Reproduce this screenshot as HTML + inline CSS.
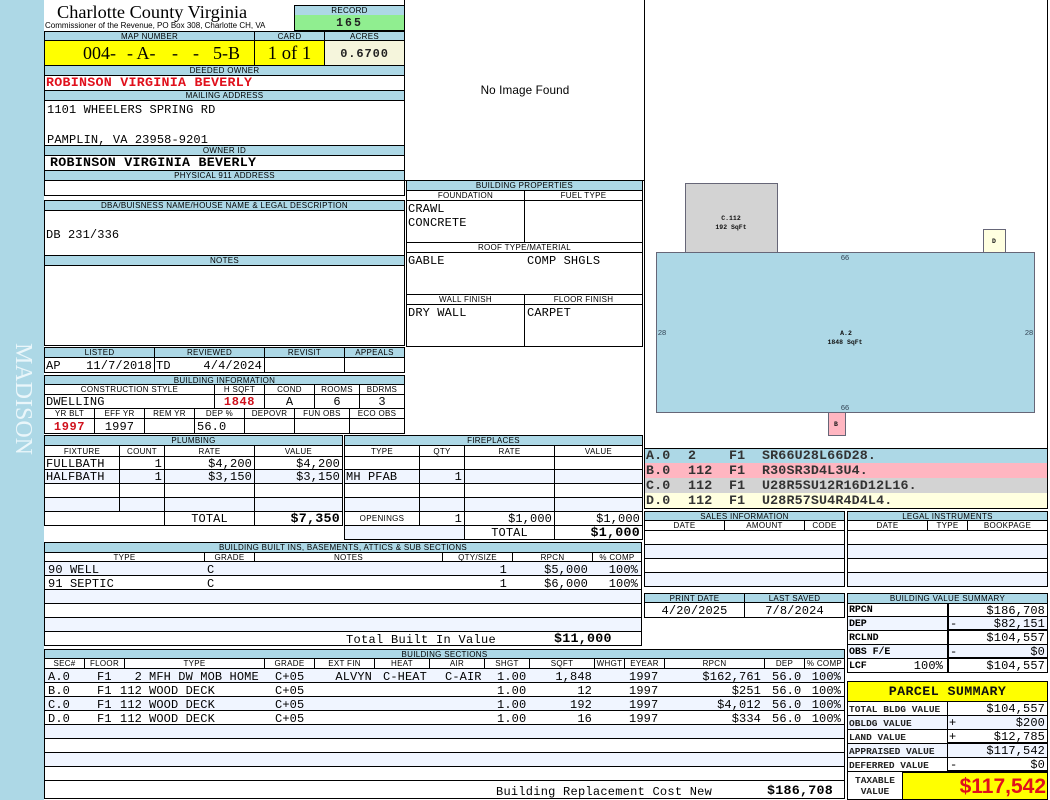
<!DOCTYPE html>
<html><head><meta charset="utf-8"><title>Property Card</title>
<style>
html,body{margin:0;padding:0;background:#fff}
#p{position:relative;width:1050px;height:800px;overflow:hidden;background:#fff;color:#000;font-family:"Liberation Mono",monospace;font-size:12px}
.a{position:absolute;box-sizing:border-box;border:1px solid #000;overflow:hidden;white-space:pre;display:flex;align-items:center;letter-spacing:.12px;padding-top:1px}
.h,.s{justify-content:center;font:8px/1 "Liberation Sans",sans-serif;letter-spacing:.3px}
.h{background:#ADD8E6}
.s{background:#fff}
.c{justify-content:center}
.r{justify-content:flex-end;padding-right:2px}
.l{padding-left:1px}
.sb{justify-content:space-between;padding:1px 2px 0 1px}
.e{background:#F0F5FF}
.t{position:absolute;white-space:pre;line-height:14px;letter-spacing:.12px;transform:translateY(1px)}
.b{font-weight:bold;font-size:13.33px;letter-spacing:.25px}
.red{color:#D0101C}
.ti{font-family:"Liberation Serif",serif;font-size:18.67px;letter-spacing:0}
.m{font-size:10px;font-weight:bold;letter-spacing:-.1px}
.n{font-size:9.5px;letter-spacing:0;font-weight:bold;color:#222}
.lg{position:absolute;left:645px;width:402px;height:15px}
.g{font-weight:bold;font-size:13.33px;color:#333;letter-spacing:.15px;line-height:15px}
</style></head><body><div id="p">
<div style="position:absolute;left:0;top:0;width:44px;height:800px;background:#ADD8E6"></div>
<div style="position:absolute;left:12px;top:343px;width:22px;height:114px;writing-mode:vertical-rl;font:24px/22px 'Liberation Serif',serif;color:#EAF6FA;white-space:nowrap">MADISON</div>

<div class="t ti" style="left:57px;top:2px;line-height:19px;font-size:18.3px">Charlotte County Virginia</div>
<div class="t" style="left:45px;top:20px;font:8px/10px 'Liberation Sans',sans-serif;letter-spacing:0">Commissioner of the Revenue, PO Box 308, Charlotte CH, VA</div>

<div style="position:absolute;left:404px;top:0;width:1px;height:196px;background:#000"></div>
<div class="a h" style="left:294px;top:5px;width:111px;height:11px">RECORD</div>
<div class="a c" style="left:294px;top:15px;width:111px;height:16px;background:#90EE90;border-top:0;font-weight:bold;letter-spacing:2px;font-size:11.5px;color:#222">165</div>

<div class="a h" style="left:44px;top:31px;width:211px;height:10px">MAP NUMBER</div>
<div class="a h" style="left:254px;top:31px;width:71px;height:10px">CARD</div>
<div class="a h" style="left:324px;top:31px;width:81px;height:10px">ACRES</div>
<div class="a" style="left:44px;top:40px;width:211px;height:26px;background:#FFFF00"></div>
<div class="t ti" style="left:83px;top:42px;line-height:21px;font-size:18px">004-</div>
<div class="t ti" style="left:127px;top:42px;line-height:21px;font-size:18px">- A-</div>
<div class="t ti" style="left:172px;top:42px;line-height:21px;font-size:18px">-</div>
<div class="t ti" style="left:193px;top:42px;line-height:21px;font-size:18px">-</div>
<div class="t ti" style="left:213px;top:42px;line-height:21px;font-size:18px">5-B</div>
<div class="a c ti" style="left:254px;top:40px;width:71px;height:26px;background:#FFFF00">1 of 1</div>
<div class="a c" style="left:324px;top:40px;width:81px;height:26px;background:#F5F5DC;font-weight:bold;letter-spacing:.9px;color:#222">0.6700</div>

<div class="a h" style="left:44px;top:65px;width:361px;height:11px">DEEDED OWNER</div>
<div class="a l b" style="left:44px;top:75px;width:361px;height:16px;color:#E0101C;padding-left:1px">ROBINSON VIRGINIA BEVERLY</div>
<div class="a h" style="left:44px;top:90px;width:361px;height:11px">MAILING ADDRESS</div>
<div class="a" style="left:44px;top:100px;width:361px;height:46px"></div>
<div class="t" style="left:47px;top:102px">1101 WHEELERS SPRING RD</div>
<div class="t" style="left:47px;top:132px">PAMPLIN, VA 23958-9201</div>
<div class="a h" style="left:44px;top:145px;width:361px;height:11px">OWNER ID</div>
<div class="a b" style="left:44px;top:155px;width:361px;height:16px;padding-left:5px">ROBINSON VIRGINIA BEVERLY</div>
<div class="a h" style="left:44px;top:170px;width:361px;height:11px">PHYSICAL 911 ADDRESS</div>
<div class="a" style="left:44px;top:180px;width:361px;height:16px"></div>

<div class="a h" style="left:44px;top:200px;width:361px;height:11px">DBA/BUISNESS NAME/HOUSE NAME &amp; LEGAL DESCRIPTION</div>
<div class="a" style="left:44px;top:210px;width:361px;height:46px"></div>
<div class="t" style="left:46px;top:227px">DB 231/336</div>
<div class="a h" style="left:44px;top:255px;width:361px;height:11px">NOTES</div>
<div class="a" style="left:44px;top:265px;width:361px;height:81px"></div>

<div class="a h" style="left:44px;top:347px;width:111px;height:11px">LISTED</div>
<div class="a h" style="left:154px;top:347px;width:111px;height:11px">REVIEWED</div>
<div class="a h" style="left:264px;top:347px;width:81px;height:11px">REVISIT</div>
<div class="a h" style="left:344px;top:347px;width:61px;height:11px">APPEALS</div>
<div class="a sb" style="left:44px;top:357px;width:111px;height:16px"><span>AP</span><span>11/7/2018</span></div>
<div class="a sb" style="left:154px;top:357px;width:111px;height:16px"><span>TD</span><span>4/4/2024</span></div>
<div class="a" style="left:264px;top:357px;width:81px;height:16px"></div>
<div class="a" style="left:344px;top:357px;width:61px;height:16px"></div>

<div class="a h" style="left:44px;top:375px;width:361px;height:10px">BUILDING INFORMATION</div>
<div class="a s" style="left:44px;top:384px;width:171px;height:11px">CONSTRUCTION STYLE</div>
<div class="a s" style="left:214px;top:384px;width:51px;height:11px">H SQFT</div>
<div class="a s" style="left:264px;top:384px;width:51px;height:11px">COND</div>
<div class="a s" style="left:314px;top:384px;width:46px;height:11px">ROOMS</div>
<div class="a s" style="left:359px;top:384px;width:46px;height:11px">BDRMS</div>
<div class="a l" style="left:44px;top:394px;width:171px;height:15px">DWELLING</div>
<div class="a c red" style="left:214px;top:394px;width:51px;height:15px;font-weight:bold;letter-spacing:.6px">1848</div>
<div class="a c" style="left:264px;top:394px;width:51px;height:15px">A</div>
<div class="a c" style="left:314px;top:394px;width:46px;height:15px">6</div>
<div class="a c" style="left:359px;top:394px;width:46px;height:15px">3</div>
<div class="a s" style="left:44px;top:408px;width:51px;height:11px">YR BLT</div>
<div class="a s" style="left:94px;top:408px;width:51px;height:11px">EFF YR</div>
<div class="a s" style="left:144px;top:408px;width:51px;height:11px">REM YR</div>
<div class="a s" style="left:194px;top:408px;width:51px;height:11px">DEP %</div>
<div class="a s" style="left:244px;top:408px;width:51px;height:11px">DEPOVR</div>
<div class="a s" style="left:294px;top:408px;width:56px;height:11px">FUN OBS</div>
<div class="a s" style="left:349px;top:408px;width:56px;height:11px">ECO OBS</div>
<div class="a c red" style="left:44px;top:418px;width:51px;height:16px;font-weight:bold;letter-spacing:.6px">1997</div>
<div class="a c" style="left:94px;top:418px;width:51px;height:16px">1997</div>
<div class="a" style="left:144px;top:418px;width:51px;height:16px"></div>
<div class="a l" style="left:194px;top:418px;width:51px;height:16px;padding-left:2px">56.0</div>
<div class="a" style="left:244px;top:418px;width:51px;height:16px"></div>
<div class="a" style="left:294px;top:418px;width:56px;height:16px"></div>
<div class="a" style="left:349px;top:418px;width:56px;height:16px"></div>

<div class="a h" style="left:44px;top:435px;width:299px;height:11px">PLUMBING</div>
<div class="a s" style="left:44px;top:445px;width:76px;height:12px">FIXTURE</div>
<div class="a s" style="left:119px;top:445px;width:46px;height:12px">COUNT</div>
<div class="a s" style="left:164px;top:445px;width:91px;height:12px">RATE</div>
<div class="a s" style="left:254px;top:445px;width:89px;height:12px">VALUE</div>
<div class="a l" style="left:44px;top:456px;width:76px;height:14px">FULLBATH</div>
<div class="a r" style="left:119px;top:456px;width:46px;height:14px">1</div>
<div class="a r" style="left:164px;top:456px;width:91px;height:14px">$4,200</div>
<div class="a r" style="left:254px;top:456px;width:89px;height:14px">$4,200</div>
<div class="a l e" style="left:44px;top:469px;width:76px;height:15px">HALFBATH</div>
<div class="a r e" style="left:119px;top:469px;width:46px;height:15px">1</div>
<div class="a r e" style="left:164px;top:469px;width:91px;height:15px">$3,150</div>
<div class="a r e" style="left:254px;top:469px;width:89px;height:15px">$3,150</div>
<div class="a" style="left:44px;top:483px;width:76px;height:15px"></div>
<div class="a" style="left:119px;top:483px;width:46px;height:15px"></div>
<div class="a" style="left:164px;top:483px;width:91px;height:15px"></div>
<div class="a" style="left:254px;top:483px;width:89px;height:15px"></div>
<div class="a e" style="left:44px;top:497px;width:76px;height:15px"></div>
<div class="a e" style="left:119px;top:497px;width:46px;height:15px"></div>
<div class="a e" style="left:164px;top:497px;width:91px;height:15px"></div>
<div class="a e" style="left:254px;top:497px;width:89px;height:15px"></div>
<div class="a" style="left:44px;top:511px;width:121px;height:15px"></div>
<div class="a c" style="left:164px;top:511px;width:91px;height:15px">TOTAL</div>
<div class="a r b" style="left:254px;top:511px;width:89px;height:15px">$7,350</div>

<div class="a h" style="left:344px;top:435px;width:299px;height:11px">FIREPLACES</div>
<div class="a s" style="left:344px;top:445px;width:76px;height:12px">TYPE</div>
<div class="a s" style="left:419px;top:445px;width:46px;height:12px">QTY</div>
<div class="a s" style="left:464px;top:445px;width:91px;height:12px">RATE</div>
<div class="a s" style="left:554px;top:445px;width:89px;height:12px">VALUE</div>
<div class="a" style="left:344px;top:456px;width:76px;height:14px"></div>
<div class="a" style="left:419px;top:456px;width:46px;height:14px"></div>
<div class="a" style="left:464px;top:456px;width:91px;height:14px"></div>
<div class="a" style="left:554px;top:456px;width:89px;height:14px"></div>
<div class="a l e" style="left:344px;top:469px;width:76px;height:15px">MH PFAB</div>
<div class="a r e" style="left:419px;top:469px;width:46px;height:15px">1</div>
<div class="a e" style="left:464px;top:469px;width:91px;height:15px"></div>
<div class="a e" style="left:554px;top:469px;width:89px;height:15px"></div>
<div class="a" style="left:344px;top:483px;width:76px;height:15px"></div>
<div class="a" style="left:419px;top:483px;width:46px;height:15px"></div>
<div class="a" style="left:464px;top:483px;width:91px;height:15px"></div>
<div class="a" style="left:554px;top:483px;width:89px;height:15px"></div>
<div class="a e" style="left:344px;top:497px;width:76px;height:15px"></div>
<div class="a e" style="left:419px;top:497px;width:46px;height:15px"></div>
<div class="a e" style="left:464px;top:497px;width:91px;height:15px"></div>
<div class="a e" style="left:554px;top:497px;width:89px;height:15px"></div>
<div class="a s" style="left:344px;top:511px;width:76px;height:15px">OPENINGS</div>
<div class="a r" style="left:419px;top:511px;width:46px;height:15px">1</div>
<div class="a r" style="left:464px;top:511px;width:91px;height:15px">$1,000</div>
<div class="a r" style="left:554px;top:511px;width:89px;height:15px">$1,000</div>
<div class="a e" style="left:344px;top:525px;width:121px;height:15px"></div>
<div class="a c" style="left:464px;top:525px;width:91px;height:15px">TOTAL</div>
<div class="a r b" style="left:554px;top:525px;width:89px;height:15px">$1,000</div>

<div class="a h" style="left:44px;top:542px;width:598px;height:11px">BUILDING BUILT INS, BASEMENTS, ATTICS &amp; SUB SECTIONS</div>
<div class="a s" style="left:44px;top:552px;width:161px;height:10px">TYPE</div>
<div class="a s" style="left:204px;top:552px;width:51px;height:10px">GRADE</div>
<div class="a s" style="left:254px;top:552px;width:189px;height:10px">NOTES</div>
<div class="a s" style="left:442px;top:552px;width:71px;height:10px">QTY/SIZE</div>
<div class="a s" style="left:512px;top:552px;width:81px;height:10px">RPCN</div>
<div class="a s" style="left:592px;top:552px;width:50px;height:10px">% COMP</div>
<div class="a e" style="left:44px;top:561px;width:598px;height:15px"></div>
<div class="a" style="left:44px;top:575px;width:598px;height:15px"></div>
<div class="a e" style="left:44px;top:589px;width:598px;height:15px"></div>
<div class="a" style="left:44px;top:603px;width:598px;height:15px"></div>
<div class="a e" style="left:44px;top:617px;width:598px;height:15px"></div>
<div class="a" style="left:44px;top:631px;width:598px;height:15px"></div>
<div class="t" style="left:48px;top:562px">90 WELL</div><div class="t" style="left:207px;top:562px">C</div>
<div class="t" style="right:543px;top:562px">1</div><div class="t" style="right:462px;top:562px">$5,000</div><div class="t" style="right:412px;top:562px">100%</div>
<div class="t" style="left:48px;top:576px">91 SEPTIC</div><div class="t" style="left:207px;top:576px">C</div>
<div class="t" style="right:543px;top:576px">1</div><div class="t" style="right:462px;top:576px">$6,000</div><div class="t" style="right:412px;top:576px">100%</div>
<div class="t" style="left:346px;top:632px;letter-spacing:.3px">Total Built In Value</div>
<div class="t b" style="left:554px;top:632px">$11,000</div>

<div class="a" style="left:404px;top:-1px;width:241px;height:182px;font:11.7px 'Liberation Sans',sans-serif;justify-content:center;padding-left:1px">No Image Found</div>

<div class="a h" style="left:406px;top:180px;width:237px;height:11px">BUILDING PROPERTIES</div>
<div class="a s" style="left:406px;top:190px;width:119px;height:11px">FOUNDATION</div>
<div class="a s" style="left:524px;top:190px;width:119px;height:11px">FUEL TYPE</div>
<div class="a" style="left:406px;top:200px;width:119px;height:43px"></div>
<div class="a" style="left:524px;top:200px;width:119px;height:43px"></div>
<div class="t" style="left:408px;top:201px">CRAWL</div>
<div class="t" style="left:408px;top:215px">CONCRETE</div>
<div class="a s" style="left:406px;top:242px;width:237px;height:11px">ROOF TYPE/MATERIAL</div>
<div class="a" style="left:406px;top:252px;width:237px;height:43px"></div>
<div class="t" style="left:408px;top:253px">GABLE</div>
<div class="t" style="left:527px;top:253px">COMP SHGLS</div>
<div class="a s" style="left:406px;top:294px;width:119px;height:11px">WALL FINISH</div>
<div class="a s" style="left:524px;top:294px;width:119px;height:11px">FLOOR FINISH</div>
<div class="a" style="left:406px;top:304px;width:119px;height:43px"></div>
<div class="a" style="left:524px;top:304px;width:119px;height:43px"></div>
<div class="t" style="left:408px;top:305px">DRY WALL</div>
<div class="t" style="left:527px;top:305px">CARPET</div>

<div class="a" style="left:644px;top:-1px;width:404px;height:450px;display:block"></div>
<svg style="position:absolute;left:645px;top:170px" width="402" height="275" viewBox="645 170 402 275">
<g stroke="#667" stroke-width="1">
<rect x="685.5" y="183.5" width="92" height="69" fill="#D3D3D3"/>
<rect x="983.5" y="229.5" width="22" height="23" fill="#FFFFE0"/>
<rect x="828.5" y="412.5" width="17" height="23" fill="#FFB6C1"/>
<rect x="656.5" y="252.5" width="378" height="160" fill="#ADD8E6"/>
</g>
<g font-family="Liberation Mono,monospace" font-size="6.5" font-weight="bold" fill="#111" text-anchor="middle">
<text x="731" y="220">C.112</text><text x="731" y="229">192 SqFt</text>
<text x="994" y="243">D</text><text x="836" y="426">B</text>
<text x="846" y="335">A.2</text><text x="845" y="344">1848 SqFt</text>
</g>
<g font-family="Liberation Sans,sans-serif" font-size="7.5" fill="#345" text-anchor="middle">
<text x="845" y="260">66</text><text x="845" y="410">66</text>
<text x="662" y="335">28</text><text x="1029" y="335">28</text>
</g>
</svg>

<div class="a" style="left:644px;top:448px;width:404px;height:61px;border-width:1px"></div>
<div class="lg" style="top:449px;height:14px;background:#ADD8E6"></div>
<div class="lg" style="top:463px;background:#FFB6C1"></div>
<div class="lg" style="top:478px;background:#D3D3D3"></div>
<div class="lg" style="top:493px;background:#FFFFE0"></div>
<div class="t g" style="left:646px;top:448px">A.0</div><div class="t g" style="left:688px;top:448px">2</div><div class="t g" style="left:729px;top:448px">F1</div><div class="t g" style="left:762px;top:448px">SR66U28L66D28.</div>
<div class="t g" style="left:646px;top:463px">B.0</div><div class="t g" style="left:688px;top:463px">112</div><div class="t g" style="left:729px;top:463px">F1</div><div class="t g" style="left:762px;top:463px">R30SR3D4L3U4.</div>
<div class="t g" style="left:646px;top:478px">C.0</div><div class="t g" style="left:688px;top:478px">112</div><div class="t g" style="left:729px;top:478px">F1</div><div class="t g" style="left:762px;top:478px">U28R5SU12R16D12L16.</div>
<div class="t g" style="left:646px;top:493px">D.0</div><div class="t g" style="left:688px;top:493px">112</div><div class="t g" style="left:729px;top:493px">F1</div><div class="t g" style="left:762px;top:493px">U28R57SU4R4D4L4.</div>

<div class="a h" style="left:644px;top:511px;width:201px;height:10px">SALES INFORMATION</div>
<div class="a s" style="left:644px;top:520px;width:81px;height:11px">DATE</div>
<div class="a s" style="left:724px;top:520px;width:81px;height:11px">AMOUNT</div>
<div class="a s" style="left:804px;top:520px;width:41px;height:11px">CODE</div>
<div class="a" style="left:644px;top:530px;width:201px;height:15px"></div>
<div class="a e" style="left:644px;top:544px;width:201px;height:15px"></div>
<div class="a" style="left:644px;top:558px;width:201px;height:15px"></div>
<div class="a e" style="left:644px;top:572px;width:201px;height:15px"></div>

<div class="a h" style="left:847px;top:511px;width:201px;height:10px">LEGAL INSTRUMENTS</div>
<div class="a s" style="left:847px;top:520px;width:81px;height:11px">DATE</div>
<div class="a s" style="left:927px;top:520px;width:41px;height:11px">TYPE</div>
<div class="a s" style="left:967px;top:520px;width:81px;height:11px">BOOKPAGE</div>
<div class="a" style="left:847px;top:530px;width:201px;height:15px"></div>
<div class="a e" style="left:847px;top:544px;width:201px;height:15px"></div>
<div class="a" style="left:847px;top:558px;width:201px;height:15px"></div>
<div class="a e" style="left:847px;top:572px;width:201px;height:15px"></div>

<div class="a h" style="left:644px;top:593px;width:101px;height:10px">PRINT DATE</div>
<div class="a h" style="left:744px;top:593px;width:101px;height:10px">LAST SAVED</div>
<div class="a c" style="left:644px;top:602px;width:101px;height:16px">4/20/2025</div>
<div class="a c" style="left:744px;top:602px;width:101px;height:16px">7/8/2024</div>

<div class="a h" style="left:847px;top:593px;width:201px;height:11px">BUILDING VALUE SUMMARY</div>
<div class="a l m" style="left:847px;top:603px;width:101px;height:14px">RPCN</div>
<div class="a r" style="left:947px;top:603px;width:101px;height:14px;border-left-width:2px">$186,708</div>
<div class="a l m e" style="left:847px;top:616px;width:101px;height:15px">DEP</div>
<div class="a r e" style="left:947px;top:616px;width:101px;height:15px;border-left-width:2px;border-bottom-width:2px">$82,151</div>
<div class="t" style="left:950px;top:616px">-</div>
<div class="a l m" style="left:847px;top:630px;width:101px;height:15px">RCLND</div>
<div class="a r" style="left:947px;top:630px;width:101px;height:15px;border-left-width:2px">$104,557</div>
<div class="a l m e" style="left:847px;top:644px;width:101px;height:15px">OBS F/E</div>
<div class="a r e" style="left:947px;top:644px;width:101px;height:15px;border-left-width:2px;border-bottom-width:2px">$0</div>
<div class="t" style="left:950px;top:644px">-</div>
<div class="a l m" style="left:847px;top:658px;width:101px;height:15px">LCF</div>
<div class="t" style="right:107px;top:658px">100%</div>
<div class="a r" style="left:947px;top:658px;width:101px;height:15px;border-left-width:2px">$104,557</div>

<div class="a c b" style="left:847px;top:681px;width:201px;height:21px;background:#FFFF00;color:#111;letter-spacing:.4px">PARCEL SUMMARY</div>
<div class="a l n" style="left:847px;top:701px;width:101px;height:15px">TOTAL BLDG VALUE</div>
<div class="a r" style="left:947px;top:701px;width:101px;height:15px">$104,557</div>
<div class="a l n e" style="left:847px;top:715px;width:101px;height:15px">OBLDG VALUE</div>
<div class="a r e" style="left:947px;top:715px;width:101px;height:15px">$200</div>
<div class="t" style="left:949px;top:715px">+</div>
<div class="a l n" style="left:847px;top:729px;width:101px;height:15px">LAND VALUE</div>
<div class="a r" style="left:947px;top:729px;width:101px;height:15px;border-bottom-width:2px">$12,785</div>
<div class="t" style="left:949px;top:729px">+</div>
<div class="a l n e" style="left:847px;top:743px;width:101px;height:15px">APPRAISED VALUE</div>
<div class="a r e" style="left:947px;top:743px;width:101px;height:15px">$117,542</div>
<div class="a l n" style="left:847px;top:757px;width:101px;height:15px">DEFERRED VALUE</div>
<div class="a r" style="left:947px;top:757px;width:101px;height:15px;border-bottom-width:2px">$0</div>
<div class="t" style="left:950px;top:757px">-</div>
<div class="a c n" style="left:847px;top:771px;width:56px;height:29px;white-space:normal;text-align:center;line-height:11px">TAXABLE VALUE</div>
<div class="a r" style="left:902px;top:771px;width:146px;height:29px;background:#FFFF00;border-top-width:2px;color:#E0101C;font:bold 21px 'Liberation Sans',sans-serif;letter-spacing:0;padding-right:1px">$117,542</div>

<div class="a h" style="left:44px;top:649px;width:801px;height:10px">BUILDING SECTIONS</div>
<div class="a s" style="left:44px;top:658px;width:41px;height:11px">SEC#</div>
<div class="a s" style="left:84px;top:658px;width:41px;height:11px">FLOOR</div>
<div class="a s" style="left:124px;top:658px;width:141px;height:11px">TYPE</div>
<div class="a s" style="left:264px;top:658px;width:51px;height:11px">GRADE</div>
<div class="a s" style="left:314px;top:658px;width:61px;height:11px">EXT FIN</div>
<div class="a s" style="left:374px;top:658px;width:56px;height:11px">HEAT</div>
<div class="a s" style="left:429px;top:658px;width:56px;height:11px">AIR</div>
<div class="a s" style="left:484px;top:658px;width:46px;height:11px">SHGT</div>
<div class="a s" style="left:529px;top:658px;width:66px;height:11px">SQFT</div>
<div class="a s" style="left:594px;top:658px;width:31px;height:11px">WHGT</div>
<div class="a s" style="left:624px;top:658px;width:41px;height:11px">EYEAR</div>
<div class="a s" style="left:664px;top:658px;width:101px;height:11px">RPCN</div>
<div class="a s" style="left:764px;top:658px;width:41px;height:11px">DEP</div>
<div class="a s" style="left:804px;top:658px;width:41px;height:11px">% COMP</div>
<div class="a e" style="left:44px;top:668px;width:801px;height:15px"></div>
<div class="a" style="left:44px;top:682px;width:801px;height:15px"></div>
<div class="a e" style="left:44px;top:696px;width:801px;height:15px"></div>
<div class="a" style="left:44px;top:710px;width:801px;height:15px"></div>
<div class="a e" style="left:44px;top:724px;width:801px;height:15px"></div>
<div class="a" style="left:44px;top:738px;width:801px;height:15px"></div>
<div class="a e" style="left:44px;top:752px;width:801px;height:15px"></div>
<div class="a" style="left:44px;top:766px;width:801px;height:15px"></div>
<div class="a" style="left:44px;top:780px;width:801px;height:19px"></div>

<div class="t" style="left:48px;top:669px">A.0</div><div class="t" style="left:97px;top:669px">F1</div><div class="t" style="right:908px;top:669px">2</div><div class="t" style="left:149px;top:669px">MFH DW MOB HOME</div><div class="t" style="left:275px;top:669px">C+05</div><div class="t" style="right:678px;top:669px">ALVYN</div><div class="t" style="left:383px;top:669px">C-HEAT</div><div class="t" style="left:445px;top:669px">C-AIR</div><div class="t" style="left:497px;top:669px">1.00</div><div class="t" style="right:458px;top:669px">1,848</div><div class="t" style="left:629px;top:669px">1997</div><div class="t" style="right:289px;top:669px">$162,761</div><div class="t" style="left:772px;top:669px">56.0</div><div class="t" style="right:209px;top:669px">100%</div>
<div class="t" style="left:48px;top:683px">B.0</div><div class="t" style="left:97px;top:683px">F1</div><div class="t" style="right:908px;top:683px">112</div><div class="t" style="left:149px;top:683px">WOOD DECK</div><div class="t" style="left:275px;top:683px">C+05</div><div class="t" style="left:497px;top:683px">1.00</div><div class="t" style="right:458px;top:683px">12</div><div class="t" style="left:629px;top:683px">1997</div><div class="t" style="right:289px;top:683px">$251</div><div class="t" style="left:772px;top:683px">56.0</div><div class="t" style="right:209px;top:683px">100%</div>
<div class="t" style="left:48px;top:697px">C.0</div><div class="t" style="left:97px;top:697px">F1</div><div class="t" style="right:908px;top:697px">112</div><div class="t" style="left:149px;top:697px">WOOD DECK</div><div class="t" style="left:275px;top:697px">C+05</div><div class="t" style="left:497px;top:697px">1.00</div><div class="t" style="right:458px;top:697px">192</div><div class="t" style="left:629px;top:697px">1997</div><div class="t" style="right:289px;top:697px">$4,012</div><div class="t" style="left:772px;top:697px">56.0</div><div class="t" style="right:209px;top:697px">100%</div>
<div class="t" style="left:48px;top:711px">D.0</div><div class="t" style="left:97px;top:711px">F1</div><div class="t" style="right:908px;top:711px">112</div><div class="t" style="left:149px;top:711px">WOOD DECK</div><div class="t" style="left:275px;top:711px">C+05</div><div class="t" style="left:497px;top:711px">1.00</div><div class="t" style="right:458px;top:711px">16</div><div class="t" style="left:629px;top:711px">1997</div><div class="t" style="right:289px;top:711px">$334</div><div class="t" style="left:772px;top:711px">56.0</div><div class="t" style="right:209px;top:711px">100%</div>
<div class="t" style="left:496px;top:784px;letter-spacing:.25px">Building Replacement Cost New</div>
<div class="t b" style="left:767px;top:784px">$186,708</div>
</div></body></html>
